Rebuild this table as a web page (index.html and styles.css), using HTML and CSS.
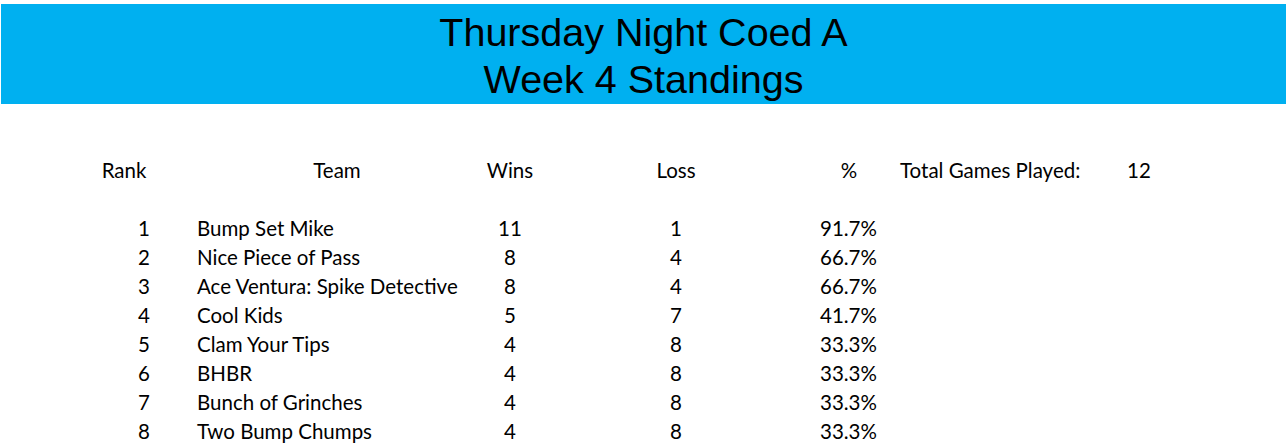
FILE: index.html
```html
<!DOCTYPE html>
<html>
<head>
<meta charset="utf-8">
<link rel="stylesheet" href="styles.css">
</head>
<body>
<header class="banner">
  <div class="title">Thursday Night Coed A</div>
  <div class="title">Week 4 Standings</div>
</header>
<div class="sheet">
  <div class="c rank hd">Rank</div>
  <div class="c team hd">Team</div>
  <div class="c wins">Wins</div>
  <div class="c loss">Loss</div>
  <div class="c pct hd">%</div>
  <div class="c label">Total Games Played:</div>
  <div class="c val">12</div>

  <div class="c blank"></div>

  <div class="c rank">1</div><div class="c team">Bump Set Mike</div><div class="c wins">11</div><div class="c loss">1</div><div class="c pct">91.7%</div>
  <div class="c rank">2</div><div class="c team">Nice Piece of Pass</div><div class="c wins">8</div><div class="c loss">4</div><div class="c pct">66.7%</div>
  <div class="c rank">3</div><div class="c team">Ace Ventura: Spike Detective</div><div class="c wins">8</div><div class="c loss">4</div><div class="c pct">66.7%</div>
  <div class="c rank">4</div><div class="c team">Cool Kids</div><div class="c wins">5</div><div class="c loss">7</div><div class="c pct">41.7%</div>
  <div class="c rank">5</div><div class="c team">Clam Your Tips</div><div class="c wins">4</div><div class="c loss">8</div><div class="c pct">33.3%</div>
  <div class="c rank">6</div><div class="c team">BHBR</div><div class="c wins">4</div><div class="c loss">8</div><div class="c pct">33.3%</div>
  <div class="c rank">7</div><div class="c team">Bunch of Grinches</div><div class="c wins">4</div><div class="c loss">8</div><div class="c pct">33.3%</div>
  <div class="c rank">8</div><div class="c team">Two Bump Chumps</div><div class="c wins">4</div><div class="c loss">8</div><div class="c pct">33.3%</div>
</div>
</body>
</html>
```
FILE: styles.css
```css
html, body {
  margin: 0;
  padding: 0;
  background: #ffffff;
}
body {
  width: 1288px;
  height: 448px;
  overflow: hidden;
}
.banner {
  margin: 4px 2px 0 1px;
  height: 100px;
  background: #00b0f0;
  display: flex;
  flex-direction: column;
  align-items: center;
  padding-top: 5px;
  box-sizing: border-box;
}
.title {
  font-family: "Liberation Sans", Arial, sans-serif;
  font-size: 39.5px;
  line-height: 47px;
  color: #000;
}
.sheet {
  margin-top: 52px;
  margin-left: 95px;
  display: grid;
  grid-template-columns: 58px 326px 62px 279px 58px 232px 58px;
  grid-auto-rows: 29px;
  font-family: Lato, "Open Sans", sans-serif;
  font-size: 20.5px;
  line-height: 29px;
  color: #000;
}
.c {
  white-space: nowrap;
}
.rank {
  grid-column: 1;
  text-align: right;
  padding-right: 3px;
}
.rank.hd {
  text-align: center;
  padding-right: 0;
}
.team {
  grid-column: 2;
  padding-left: 44px;
}
.team.hd {
  padding-left: 42px;
  text-align: center;
}
.wins {
  grid-column: 3;
  text-align: center;
}
.loss {
  grid-column: 4;
  text-align: center;
  padding-right: 9px;
}
.pct {
  grid-column: 5;
  text-align: right;
  padding-right: 3px;
}
.pct.hd {
  text-align: center;
  padding-right: 0;
}
.label {
  grid-column: 6;
  padding-left: 22px;
}
.val {
  grid-column: 7;
  text-align: center;
}
.blank {
  grid-column: 1 / -1;
}
```
